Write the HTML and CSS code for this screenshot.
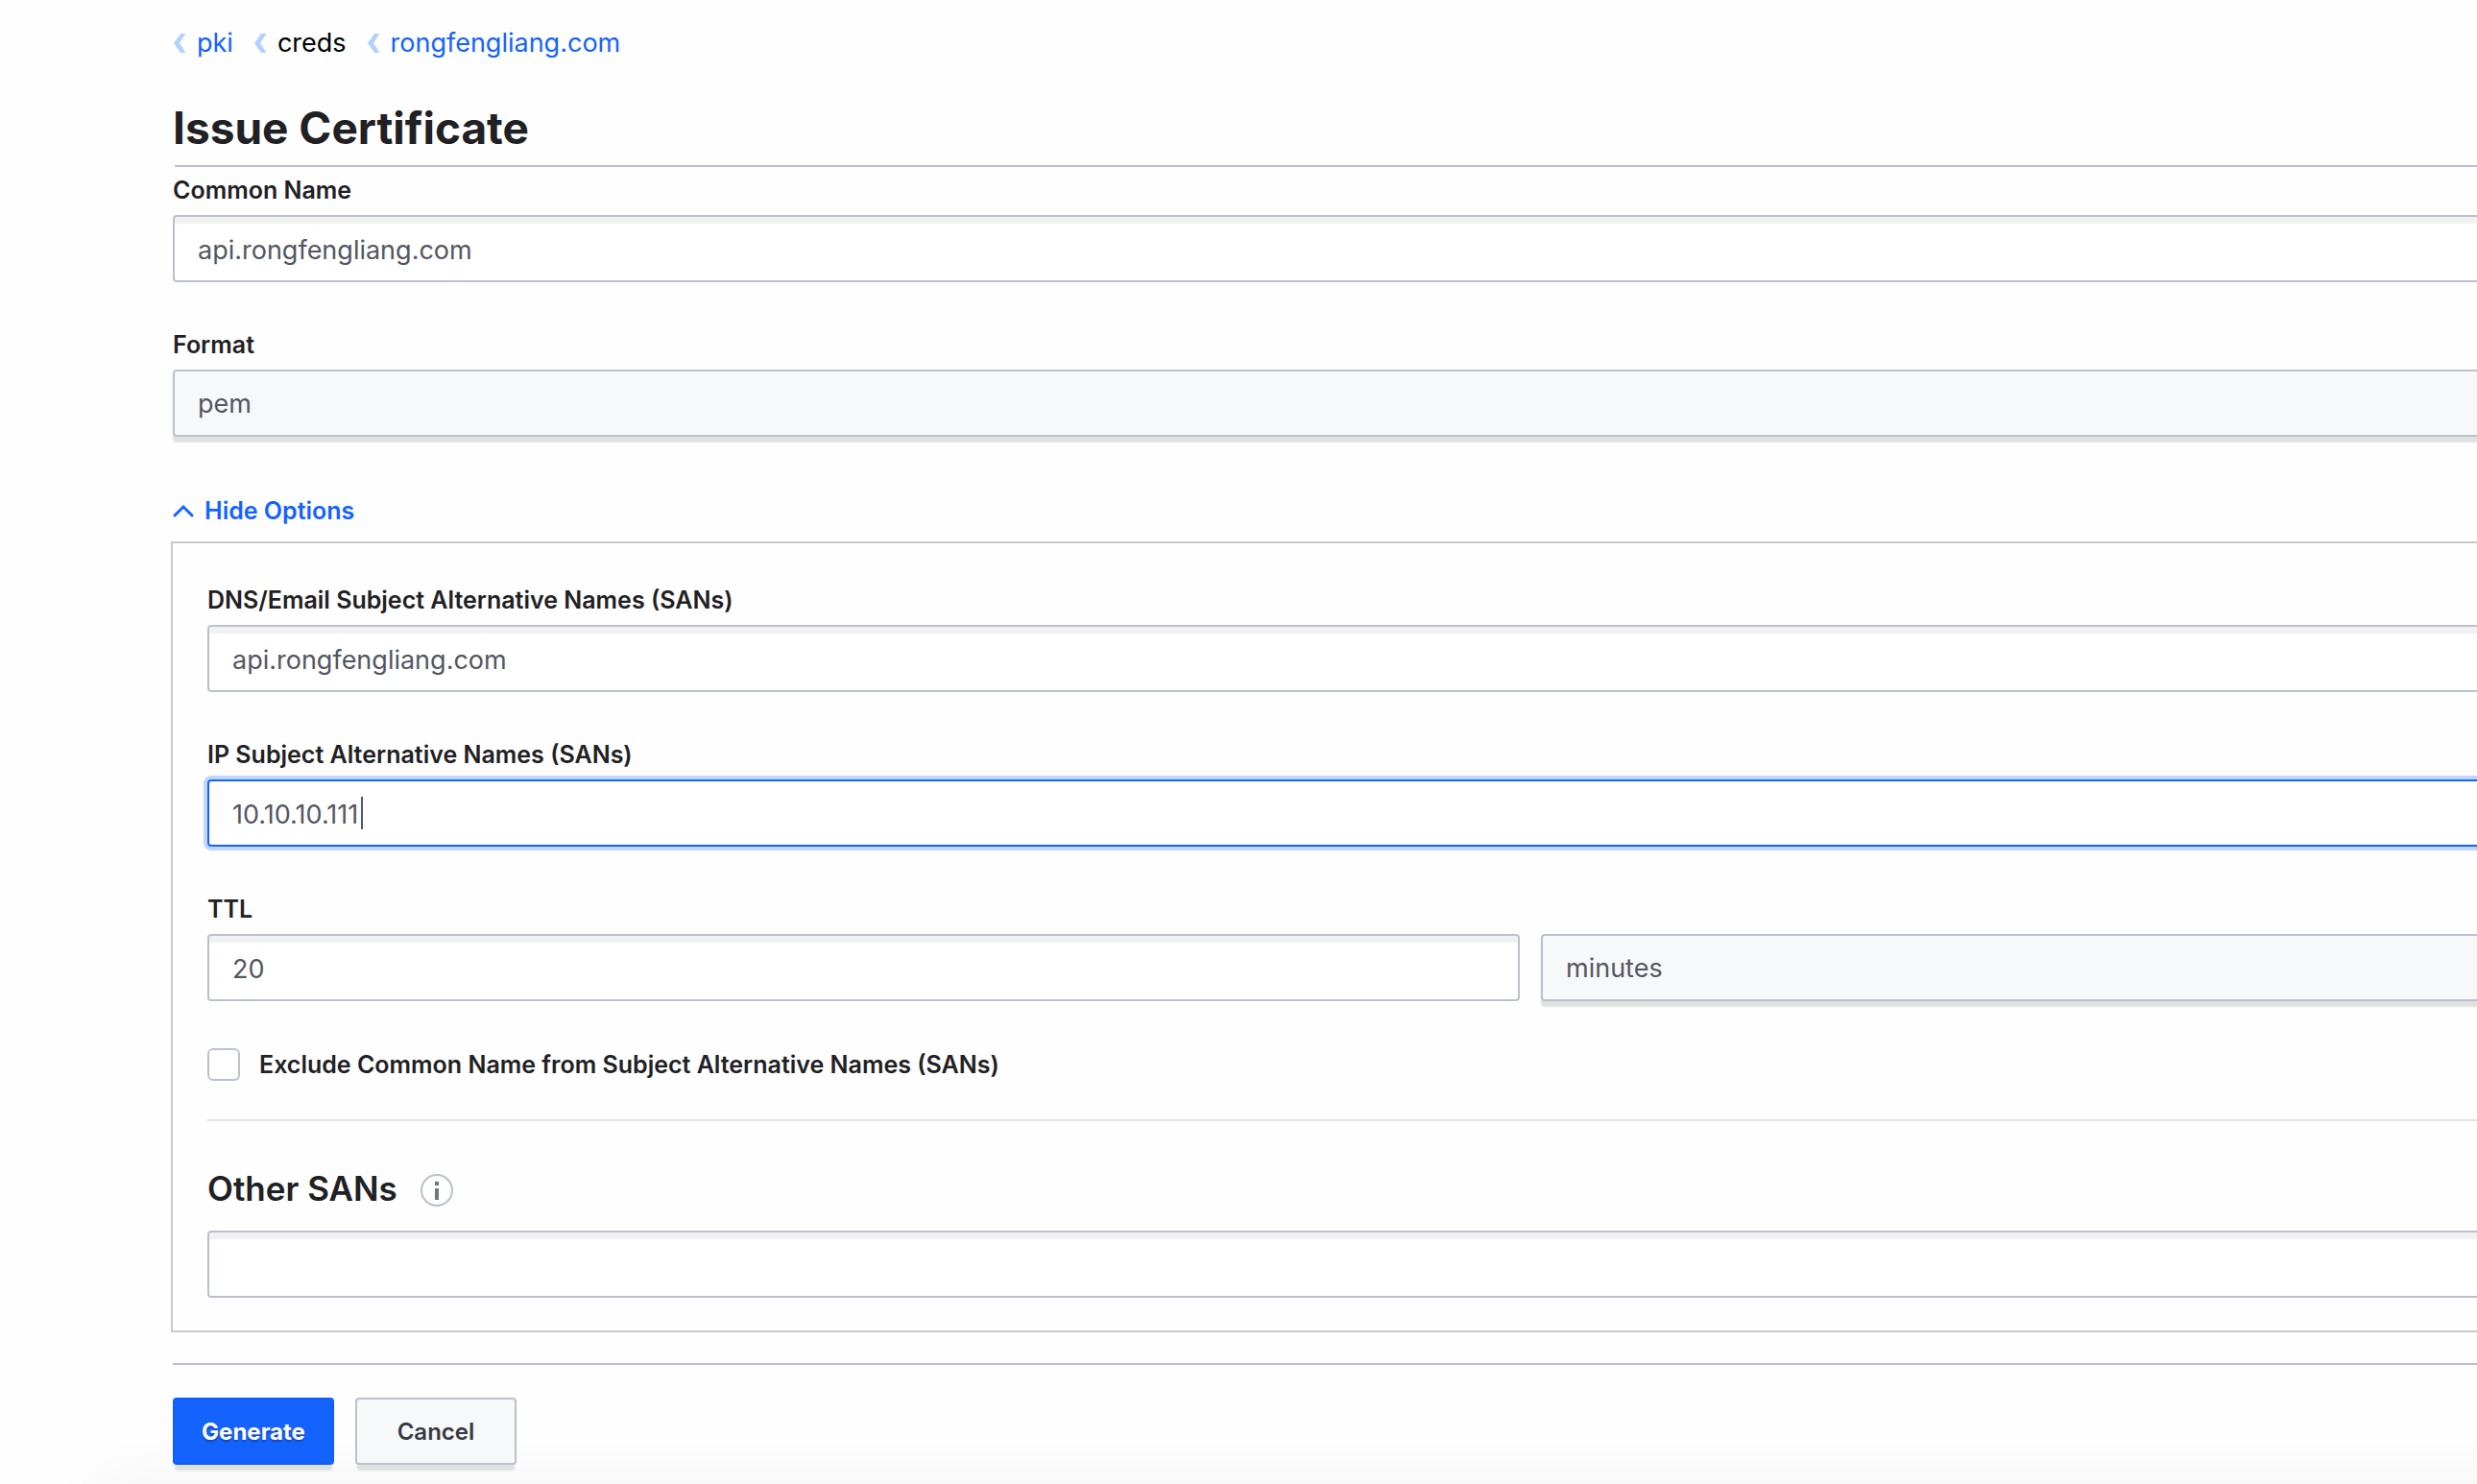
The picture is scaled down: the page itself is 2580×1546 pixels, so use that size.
FILE: index.html
```html
<!DOCTYPE html>
<html lang="en">
<head>
<meta charset="utf-8">
<title>Issue Certificate</title>
<link rel="stylesheet" href="styles.css">
</head>
<body>
<main class="page">
  <nav class="breadcrumb" aria-label="Breadcrumb">
    <span class="crumb">
      <svg class="crumb-icon" viewBox="0 0 14 20" aria-hidden="true"><path d="M8 0H13.500L7 10L13.500 20H8L1 10Z"/></svg>
      <a href="#pki">pki</a>
    </span>
    <span class="crumb">
      <svg class="crumb-icon" viewBox="0 0 14 20" aria-hidden="true"><path d="M8 0H13.500L7 10L13.500 20H8L1 10Z"/></svg>
      <span>creds</span>
    </span>
    <span class="crumb">
      <svg class="crumb-icon" viewBox="0 0 14 20" aria-hidden="true"><path d="M8 0H13.500L7 10L13.500 20H8L1 10Z"/></svg>
      <a href="#role">rongfengliang.com</a>
    </span>
  </nav>
  <h1 class="title">Issue Certificate</h1>
  <form class="form">
    <div class="field">
      <label class="label" for="common-name">Common Name</label>
      <input class="control" id="common-name" type="text" value="api.rongfengliang.com">
    </div>
    <div class="field">
      <label class="label" for="format">Format</label>
      <select class="control select" id="format"><option>pem</option><option>der</option></select>
    </div>
    <button class="toggle" type="button" aria-expanded="true" aria-controls="options">
      <svg class="toggle-icon" viewBox="0 0 22 14" aria-hidden="true"><path d="M2 12L11 3L20 12"/></svg>
      Hide Options
    </button>
    <div class="options" id="options">
      <div class="field">
        <label class="label" for="dns-sans">DNS/Email Subject Alternative Names (SANs)</label>
        <input class="control" id="dns-sans" type="text" value="api.rongfengliang.com">
      </div>
      <div class="field">
        <label class="label" for="ip-sans">IP Subject Alternative Names (SANs)</label>
        <div class="editing">
          <input class="control active" id="ip-sans" type="text" value="10.10.10.111">
          <span class="caret"></span>
        </div>
      </div>
      <div class="field">
        <label class="label" for="ttl">TTL</label>
        <div class="pair">
          <input class="control" id="ttl" type="text" value="20">
          <select class="control select" aria-label="TTL unit"><option>minutes</option><option>hours</option></select>
        </div>
      </div>
      <div class="check">
        <input class="checkbox" id="exclude" type="checkbox">
        <label class="label" for="exclude">Exclude Common Name from Subject Alternative Names (SANs)</label>
      </div>
      <hr class="divider">
      <div class="subhead">
        <label class="subtitle" for="other-sans">Other SANs</label>
        <svg class="info" viewBox="0 0 34 34" role="img" aria-label="Information"><circle cx="17" cy="17" r="16"/><path d="M15 8h4v4h-4zM15 15h4v12h-4z"/></svg>
      </div>
      <input class="control" id="other-sans" type="text">
    </div>
    <div class="actions">
      <button class="button primary" type="submit">Generate</button>
      <button class="button" type="button">Cancel</button>
    </div>
  </form>
  <div class="floor"></div>
</main>
</body>
</html>
```
FILE: styles.css
```css
* { box-sizing: border-box; }
html, body { margin: 0; background: #fefefe; }
body {
  font-family: Inter, "Liberation Sans", sans-serif;
  font-size: 27px;
  line-height: 36px;
  color: #1f2124;
}
.page {
  min-height: 100vh;
  padding: 27px 0 0 180px;
  overflow: clip;
}
.breadcrumb { display: flex; gap: 21px; color: #000; }
.crumb { display: flex; align-items: center; gap: 11px; }
.crumb-icon { width: 14px; height: 20px; fill: #b3d1ff; }
.breadcrumb a { color: #1563ff; text-decoration: none; }
.title {
  margin: 40px 0 0;
  font-size: 46px;
  line-height: 60px;
  font-weight: 700;
}
.form {
  margin: 9px -430px 0 0;
}
.form::before {
  content: "";
  display: block;
  height: 2px;
  margin-left: 2px;
  margin-bottom: 8px;
  background: #bac1cc;
}
.field { margin-bottom: 49px; }
.label {
  display: block;
  font-size: 25px;
  line-height: 32px;
  font-weight: 600;
}
.control {
  display: block;
  width: 100%;
  height: 70px;
  margin: 10px 0 0;
  padding: 2px 24px 0;
  border: 2px solid #bac1cc;
  border-radius: 4px;
  background: #fff;
  box-shadow: inset 0 8px 2px -1px rgba(10, 10, 10, 0.06);
  color: #525761;
  font: inherit;
  appearance: none;
}
.control.active,
.control:focus {
  border-color: #1563ff;
  outline: none;
  box-shadow: 0 0 0 4px #bfd7ff;
}
.select {
  background: #f7f8fa;
  box-shadow: 0 6px 2px #e0e0e0;
}
.editing { position: relative; }
.caret {
  position: absolute;
  top: 18px;
  left: 160px;
  width: 2px;
  height: 34px;
  background: #525761;
}
.toggle {
  display: flex;
  align-items: center;
  gap: 11px;
  margin: 61px 0 0;
  padding: 0;
  border: 0;
  background: none;
  color: #1563ff;
  font: 600 25px/32px Inter, "Liberation Sans", sans-serif;
}
.toggle-icon { width: 22px; height: 14px; fill: none; stroke: #1563ff; stroke-width: 3; stroke-linecap: round; }
.options {
  margin: 16px 0 0 -2px;
  padding: 43px 36px 34px;
  border: 2px solid #cacbd0;
}
.pair { display: grid; grid-template-columns: 1fr 1fr; gap: 22px; }
.check { display: flex; align-items: center; gap: 20px; height: 34px; }
.checkbox {
  appearance: none;
  width: 34px;
  height: 34px;
  margin: 0;
  border: 2px solid #bac1cc;
  border-radius: 6px;
  background: #fff;
}
.divider { height: 2px; margin: 40px 0; border: 0; background: #e3e4e6; }
.subhead { display: flex; align-items: center; gap: 24px; padding: 6px 0; }
.subtitle { padding-bottom: 4px; font-size: 35px; line-height: 48px; font-weight: 600; }
.info { width: 34px; height: 34px; fill: #6f7682; }
.info circle { fill: none; stroke: #bac1cc; stroke-width: 2; }
.actions {
  display: flex;
  gap: 22px;
  margin-top: 32px;
  padding: 34px 0 20px;
  border-top: 2px solid #bac1cc;
}
.button {
  width: 168px;
  height: 70px;
  padding: 2px 0 0;
  border: 2px solid #bac1cc;
  border-radius: 4px;
  background: #f7f8fa;
  box-shadow: 0 8px 2px -2px #e0e0e0;
  color: #373a42;
  font: 600 24px/32px Inter, "Liberation Sans", sans-serif;
}
.primary {
  border-color: #0f5dff;
  background: #1563ff;
  color: #fff;
  font-weight: 700;
  text-shadow: 0 2px 2px rgba(0, 0, 0, 0.3);
}
.floor { margin: 0 -430px 0 -60px; box-shadow: 0 20px 60px 20px rgba(0, 0, 0, 0.06); }
```
